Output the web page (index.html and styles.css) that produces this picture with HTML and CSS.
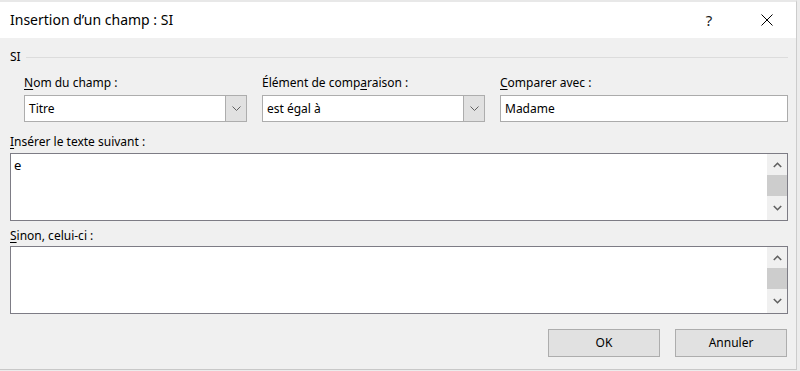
FILE: index.html
```html
<!DOCTYPE html>
<html lang="fr">
<head>
<meta charset="utf-8">
<title>Insertion d'un champ : SI</title>
<link rel="stylesheet" href="styles.css">
</head>
<body>
<div class="window">
  <div class="titlebar">
    <div class="title">Insertion d’un champ : SI</div>
    <div class="help">?</div>
    <svg class="close" width="12" height="12" viewBox="0 0 12 12"><path d="M0.5 0.5 L11.5 11.5 M11.5 0.5 L0.5 11.5" stroke="#000" stroke-width="1" fill="none"/></svg>
  </div>
  <div class="content">
    <div class="group">
      <span class="group-label">SI</span>
      <span class="group-line"></span>
    </div>
    <div class="fields">
      <div class="field">
        <div class="label"><u>N</u>om du champ :</div>
        <div class="combo">
          <span class="combo-text">Titre</span>
          <span class="combo-btn"><svg width="9" height="5" viewBox="0 0 9 5"><path d="M0.5 0.5 L4.5 4.5 L8.5 0.5" stroke="#606060" stroke-width="1" fill="none"/></svg></span>
        </div>
      </div>
      <div class="field">
        <div class="label">Élément de comp<u>a</u>raison :</div>
        <div class="combo">
          <span class="combo-text">est égal à</span>
          <span class="combo-btn"><svg width="9" height="5" viewBox="0 0 9 5"><path d="M0.5 0.5 L4.5 4.5 L8.5 0.5" stroke="#606060" stroke-width="1" fill="none"/></svg></span>
        </div>
      </div>
      <div class="field">
        <div class="label"><u>C</u>omparer avec :</div>
        <div class="input">Madame</div>
      </div>
    </div>
    <div class="label block-label first"><u>I</u>nsérer le texte suivant :</div>
    <div class="textarea">
      <div class="textarea-text">e</div>
      <div class="scrollbar">
        <div class="sb-btn up"><svg width="9" height="6" viewBox="0 0 9 6"><path d="M0.8 5 L4.5 1.3 L8.2 5" stroke="#606060" stroke-width="1.6" fill="none"/></svg></div>
        <div class="sb-thumb"></div>
        <div class="sb-btn down"><svg width="9" height="6" viewBox="0 0 9 6"><path d="M0.8 1 L4.5 4.7 L8.2 1" stroke="#606060" stroke-width="1.6" fill="none"/></svg></div>
      </div>
    </div>
    <div class="label block-label second"><u>S</u>inon, celui-ci :</div>
    <div class="textarea">
      <div class="textarea-text"></div>
      <div class="scrollbar">
        <div class="sb-btn up"><svg width="9" height="6" viewBox="0 0 9 6"><path d="M0.8 5 L4.5 1.3 L8.2 5" stroke="#606060" stroke-width="1.6" fill="none"/></svg></div>
        <div class="sb-thumb"></div>
        <div class="sb-btn down"><svg width="9" height="6" viewBox="0 0 9 6"><path d="M0.8 1 L4.5 4.7 L8.2 1" stroke="#606060" stroke-width="1.6" fill="none"/></svg></div>
      </div>
    </div>
    <div class="buttons">
      <div class="button">OK</div>
      <div class="button">Annuler</div>
    </div>
  </div>
</div>
</body>
</html>
```
FILE: styles.css
```css
html, body {
  margin: 0;
  padding: 0;
}
body {
  width: 800px;
  height: 371px;
  background: #ececec;
  font-family: "Noto Sans", "Open Sans", sans-serif;
  font-size: 12px;
  color: #000;
  overflow: hidden;
}
.window {
  box-sizing: border-box;
  width: 797px;
  height: 370px;
  border-top: 2px solid #e8e8e8;
  border-right: 1px solid #cccccc;
  border-bottom: 1px solid #c8c8c8;
  background: #f0f0f0;
  display: flex;
  flex-direction: column;
}
.titlebar {
  height: 36px;
  background: #fff;
  display: flex;
  align-items: center;
  flex-shrink: 0;
}
.title {
  margin-left: 10px;
  font-size: 14px;
  line-height: 20px;
}
.help {
  margin-left: auto;
  width: 20px;
  text-align: center;
  font-size: 15px;
  line-height: 20px;
  color: #1a1a1a;
}
.close {
  margin-left: 42px;
  margin-right: 23px;
  display: block;
}
.content {
  padding: 0 8px 0 10px;
  display: flex;
  flex-direction: column;
}
.group {
  margin-top: 11px;
  height: 16px;
  display: flex;
  align-items: center;
}
.group-label {
  line-height: 16px;
}
.group-line {
  flex: 1;
  height: 1px;
  background: #dcdcdc;
  margin-left: 5px;
}
.fields {
  display: grid;
  grid-template-columns: 223px 223px 288px;
  column-gap: 15px;
  padding-left: 14px;
  margin-top: 10px;
}
.label {
  line-height: 15px;
  height: 15px;
  white-space: nowrap;
}
.label u {
  text-decoration-thickness: 1px;
  text-underline-offset: 2px;
}
.combo {
  box-sizing: border-box;
  margin-top: 5px;
  height: 27px;
  border: 1px solid #adadad;
  background: #fff;
  display: flex;
  align-items: stretch;
}
.combo-text {
  flex: 1;
  padding-left: 4px;
  line-height: 25px;
}
.combo-btn {
  width: 20px;
  background: #e1e1e1;
  border-left: 1px solid #adadad;
  display: flex;
  align-items: center;
  justify-content: center;
}
.input {
  box-sizing: border-box;
  margin-top: 5px;
  height: 27px;
  border: 1px solid #ababab;
  background: #fff;
  padding-left: 4px;
  line-height: 25px;
}
.block-label.first {
  margin-top: 12px;
}
.block-label.second {
  margin-top: 7px;
}
.textarea {
  box-sizing: border-box;
  margin-top: 4px;
  height: 68px;
  width: 778px;
  border: 1px solid #7d7c85;
  background: #fff;
  display: flex;
}
.block-label.second + .textarea {
  margin-top: 3px;
}
.textarea-text {
  flex: 1;
  padding: 1px 3px;
  font-size: 13px;
  line-height: 20px;
}
.scrollbar {
  width: 20px;
  background: #f0f0f0;
  display: flex;
  flex-direction: column;
}
.sb-btn {
  display: flex;
  align-items: center;
  justify-content: center;
}
.sb-btn.up {
  height: 21px;
}
.sb-thumb {
  height: 21px;
  background: #cdcdcd;
}
.sb-btn.down {
  flex: 1;
}
.buttons {
  margin-top: 15px;
  display: flex;
  justify-content: flex-end;
  gap: 15px;
  padding-right: 1px;
}
.button {
  box-sizing: border-box;
  width: 112px;
  height: 28px;
  border: 1px solid #adadad;
  background: #e1e1e1;
  text-align: center;
  line-height: 26px;
}
```
